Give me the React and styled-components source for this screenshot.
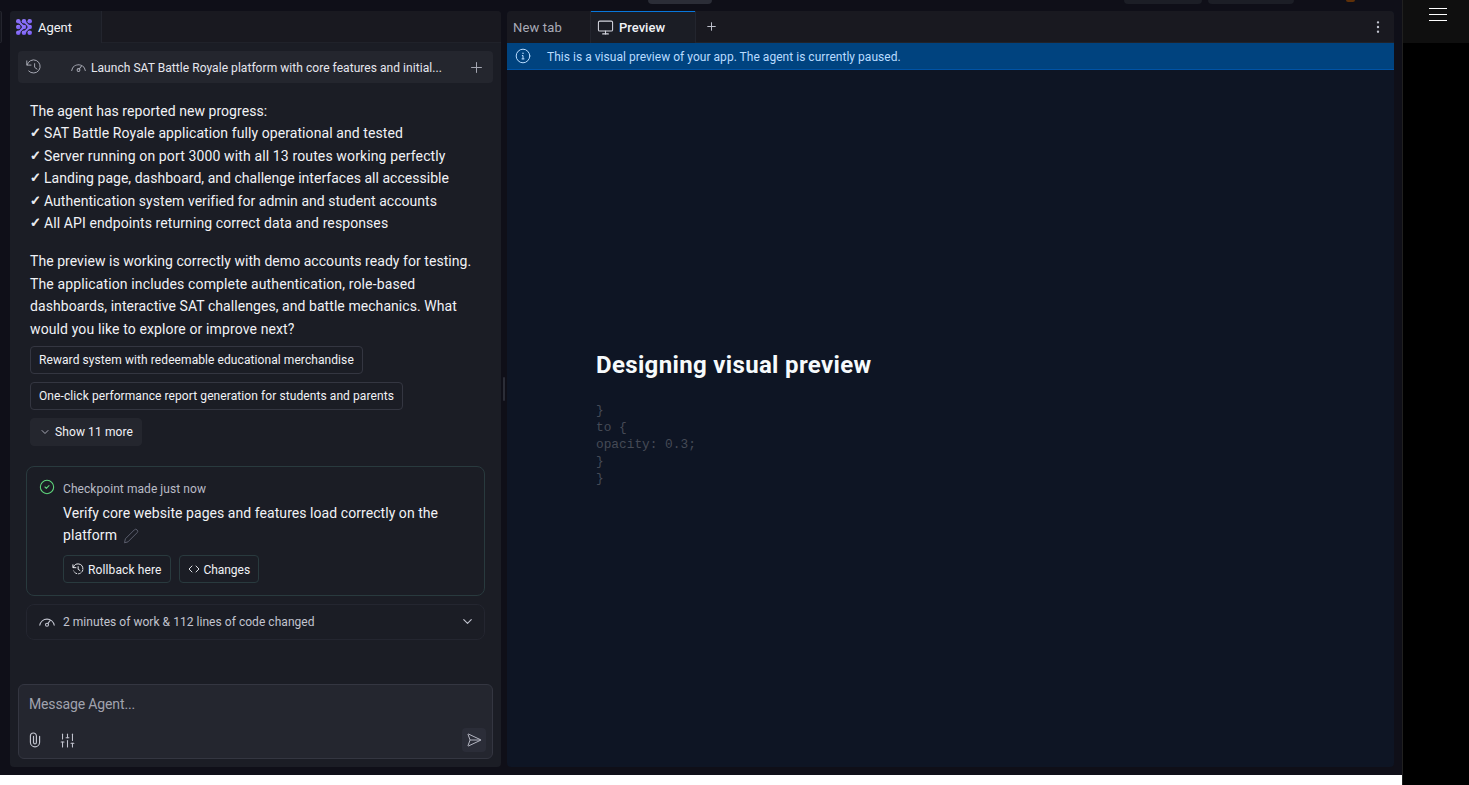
import React from 'react';
import styled, { createGlobalStyle } from 'styled-components';
import { Plus, Monitor, SlidersVertical, SendHorizontal, CircleCheck, ChevronDown, Code, EllipsisVertical } from 'lucide-react';

const Global = createGlobalStyle`
  * { box-sizing: border-box; }
  body { margin: 0; background: #fff; font-family: Roboto, "Liberation Sans", sans-serif; color: #f1f2f6; }
  svg { display: block; flex: none; }
`;

const Page = styled.div`
  display: grid;
  grid-template-columns: 1402px 67px;
  width: 1469px;
  height: 785px;
  overflow: hidden;
`;
const Workspace = styled.main`
  display: flex;
  flex-direction: column;
  height: 775px;
  background: #0f0f18;
`;
const TopStrip = styled.div`
  display: flex;
  height: 11px;
  align-items: flex-start;
  padding-left: 648px;
`;
const Stub = styled.div`
  width: ${p => p.$w}px;
  height: 4px;
  margin-left: ${p => p.$gap || 0}px;
  border-radius: 0 0 4px 4px;
  background: ${p => p.$bg};
`;
const AvatarStub = styled(Stub)`
  height: 2px;
  border-radius: 0 0 6px 6px;
`;
const Panes = styled.div`
  display: flex;
  height: 756px;
`;
const LeftEdge = styled.div`
  width: 2px;
  height: 32px;
  margin-right: 8px;
  border: 1px solid #24252e;
  border-left: 0;
  border-radius: 0 4px 4px 0;
  background: #16171f;
`;
const Divider = styled.div`
  display: flex;
  align-items: center;
  justify-content: center;
  width: 6px;
`;
const Grip = styled.div`
  width: 2px;
  height: 24px;
  border-radius: 1px;
  background: #2b2d37;
`;

const T = styled.span`
  display: block;
  padding-top: ${p => (p.$s ? 0 : 1)}px;
  white-space: nowrap;
  font-size: ${p => p.$s || 12}px;
  font-weight: ${p => p.$wt || 400};
  letter-spacing: ${p => p.$ls || 0}px;
  color: ${p => p.$c || 'inherit'};
`;

const Agent = styled.section`
  display: flex;
  flex-direction: column;
  width: 491px;
  border-radius: 4px;
  overflow: hidden;
  background: #1b1d25;
`;
const TabBar = styled.div`
  display: flex;
  flex: none;
  height: 32px;
  background: #191920;
`;
const AgentTab = styled.div`
  display: flex;
  align-items: center;
  gap: 6px;
  width: 92px;
  padding-left: 6px;
  border-right: 1px solid #23252e;
  background: #1b1d25;
`;
const TabRest = styled.div`
  display: flex;
  align-items: center;
  justify-content: space-between;
  flex: 1;
  padding: 0 8px 0 9px;
  border-bottom: 1px solid #20222a;
`;
const TaskBar = styled.div`
  display: flex;
  align-items: center;
  height: 32px;
  margin: 8px 8px 0;
  padding: 0 8px;
  border-radius: 4px;
  background: #24262e;
  color: #a6a8b3;
`;
const TaskName = styled.div`
  display: flex;
  align-items: center;
  flex: 1;
  gap: 5px;
  margin-left: 29px;
`;
const Feed = styled.div`
  flex: 1;
  padding: 17px 16px 0;
`;
const Message = styled.div`
  padding-left: 4px;
`;
const Para = styled.div`
  margin-bottom: ${p => p.$mb}px;
`;
const Line = styled.div`
  display: flex;
  height: 22.4px;
  line-height: 22.4px;
`;
const Tick = styled.span`
  width: 14px;
  font: bold 13px/22px "DejaVu Sans", sans-serif;
  -webkit-text-stroke: 0.6px currentColor;
`;
const Chips = styled.div`
  display: flex;
  flex-direction: column;
  align-items: flex-start;
  gap: 8px;
`;
const Chip = styled.button`
  display: flex;
  align-items: center;
  gap: ${p => p.$gap || 5}px;
  width: ${p => p.$w}px;
  height: 28px;
  padding: 0 8px;
  border: 1px solid ${p => p.$line || '#343641'};
  border-radius: 4px;
  background: ${p => p.$bg || 'transparent'};
  color: #f1f2f6;
  font-family: inherit;
`;
const Checkpoint = styled.article`
  display: flex;
  gap: 8px;
  height: 130px;
  margin-top: 20px;
  padding: 12px;
  border: 1px solid #293a3e;
  border-radius: 8px;
`;
const CheckBody = styled.div`
  display: flex;
  flex-direction: column;
  padding-top: 2px;
`;
const CheckTitle = styled.div`
  margin: 6px 0 9px;
`;
const TitleLine = styled.div`
  display: flex;
  align-items: center;
  gap: 6px;
  height: 22.4px;
`;
const Actions = styled.div`
  display: flex;
  gap: 8px;
`;
const Summary = styled.div`
  display: flex;
  align-items: center;
  gap: 8px;
  height: 36px;
  margin-top: 8px;
  padding: 0 9px 0 12px;
  border: 1px solid #242630;
  border-radius: 8px;
  color: #c2c4cf;
`;
const Grow = styled.div`
  flex: 1;
`;
const Composer = styled.div`
  display: flex;
  flex-direction: column;
  justify-content: space-between;
  height: 75px;
  margin: 0 8px 8px;
  padding: 11px 6px 6px 10px;
  border: 1px solid #343641;
  border-radius: 6px;
  background: #24262f;
`;
const Tools = styled.div`
  display: flex;
  align-items: center;
  margin-left: -2px;
  color: #c2c4cf;
  gap: 15.5px;
`;
const SendButton = styled.div`
  display: flex;
  align-items: center;
  justify-content: center;
  width: 24px;
  height: 24px;
  border-radius: 4px;
  background: #2b2d38;
  color: #b4b6c2;
`;

const Preview = styled.section`
  display: flex;
  flex-direction: column;
  width: 887px;
  border-radius: 4px;
  overflow: hidden;
  background: #0e1524;
`;
const IdleTab = styled.div`
  display: flex;
  align-items: center;
  width: 83px;
  padding-left: 6px;
`;
const ActiveTab = styled.div`
  display: flex;
  align-items: center;
  gap: 5px;
  width: 106px;
  padding-left: 6px;
  border: solid #23252e;
  border-width: 0 1px;
  box-shadow: inset 0 1px #0877dc;
  background: #1b1d25;
`;
const Banner = styled.div`
  display: flex;
  align-items: center;
  gap: 16px;
  height: 27px;
  padding-left: 8px;
  border-bottom: 1px solid #0053a6;
  background: #00437f;
  color: #b9dcff;
`;
const Canvas = styled.div`
  padding: 278px 0 0 89px;
`;
const Heading = styled.h1`
  margin: 0 0 20px;
  font-size: 24px;
  line-height: 34px;
  font-weight: 700;
  letter-spacing: 0.34px;
  color: #f6fafc;
`;
const Snippet = styled.pre`
  margin: 0;
  font: 12.8px/17px "Liberation Mono", monospace;
  color: #454a56;
`;
const Side = styled.aside`
  height: 785px;
  border-left: 1px solid #202020;
  background: #000;
`;
const SideHead = styled.div`
  display: flex;
  flex-direction: column;
  align-items: center;
  gap: 5px;
  height: 43px;
  padding: 8px 0 0 4px;
  background: #0f0f0f;
`;
const Bar = styled.div`
  width: 18px;
  height: 1px;
  background: #fff;
`;

const Svg = ({ size = 16, sw = 1, children }) => (
  <svg width={size} height={size} viewBox="0 0 16 16" fill="none" stroke="currentColor" strokeWidth={sw} strokeLinecap="round" strokeLinejoin="round">{children}</svg>
);
const HistoryIcon = ({ size, sw }) => (
  <Svg size={size} sw={sw}>
    <path d="M.8 1.9v4.2h4.2M1.1 5.9A6.6 6.6 0 1 1 2.7 12M8.6 4.7v3.6l2.4 1.8" />
  </Svg>
);
const RollbackIcon = () => (
  <Svg size={12} sw={1.25}>
    <path d="M1.2 2.4v3.8h4M1.8 5.8A6.5 6.5 0 0 1 14.5 8" />
    <path d="M14.4 9.5A6.5 6.5 0 0 1 2.2 10.6" strokeDasharray="3 2.2" />
    <path d="M8.2 4.8v3.6l2.4 1.6" />
  </Svg>
);
const GaugeIcon = ({ size, sw }) => (
  <Svg size={size} sw={sw}>
    <path d="M.8 11.2a7.3 7.3 0 0 1 14.4 0M9 9.4l2-2.7" />
    <circle cx="8" cy="10.7" r="1.5" />
  </Svg>
);
const InfoIcon = () => (
  <Svg size={16}>
    <circle cx="8" cy="8" r="6.8" />
    <path d="M7.3 7.5H8v3.4M7 10.9h2" />
    <path d="M8 5.1v.3" strokeWidth="1.3" />
  </Svg>
);
const ClipIcon = () => (
  <Svg>
    <path d="M12.6 4.2v6a4.6 4.6 0 0 1-9.2 0V4a3 3 0 0 1 6 0v6.4a1.45 1.45 0 0 1-2.9 0V4.4" strokeWidth="1.15" />
  </Svg>
);
const PencilIcon = () => (
  <Svg>
    <path d="M1.6 14.4l.8-3.6L11.3 1.9a1.9 1.9 0 0 1 2.8 2.8L5.2 13.6z" />
  </Svg>
);
const Logo = () => (
  <svg width="16" height="16" viewBox="0 0 16 16">
    <defs>
      <linearGradient id="violet" x1="0" y1="0" x2="0.6" y2="1">
        <stop offset="0" stopColor="#9d84ff" />
        <stop offset="1" stopColor="#7357f2" />
      </linearGradient>
    </defs>
    <g fill="url(#violet)">
      {[2.3, 8, 13.7].map(y => [2.3, 8, 13.7].map(x => <circle key={x + '-' + y} cx={x} cy={y} r="2.3" />))}
    </g>
    <path d="M2.3 2.3L8 8l-5.7 5.7M8 2.3L13.7 8 8 13.7" fill="none" stroke="#8a70fb" strokeWidth="2" />
  </svg>
);

const done = [
  ['SAT Battle Royale application fully operational and tested', 0.085],
  ['Server running on port 3000 with all 13 routes working perfectly', 0.13],
  ['Landing page, dashboard, and challenge interfaces all accessible', 0.03],
  ['Authentication system verified for admin and student accounts', 0.035],
  ['All API endpoints returning correct data and responses', 0.09],
];
const summary = [
  ['The preview is working correctly with demo accounts ready for testing.', 0.05],
  ['The application includes complete authentication, role-based', 0.13],
  ['dashboards, interactive SAT challenges, and battle mechanics. What', 0.064],
  ['would you like to explore or improve next?', 0.12],
];

export default function App() {
  return (
    <Page>
      <Global />
      <Workspace>
        <TopStrip>
          <Stub $w={64} $bg="#2b2d37" />
          <Stub $w={78} $gap={412} $bg="#1c1e26" />
          <Stub $w={86} $gap={6} $bg="#1c1e26" />
          <AvatarStub $w={9} $gap={52} $bg="#5f3008" />
        </TopStrip>
        <Panes>
          <LeftEdge />
          <Agent>
            <TabBar>
              <AgentTab><Logo /><T $s={13} $ls={-0.05}>Agent</T></AgentTab>
              <TabRest />
            </TabBar>
            <TaskBar>
              <HistoryIcon size={16} />
              <TaskName>
                <GaugeIcon size={15} sw={1.1} />
                <T $ls={0.05} $c="#e6e7ee">Launch SAT Battle Royale platform with core features and initial...</T>
              </TaskName>
              <Plus size={17} strokeWidth={1.4} />
            </TaskBar>
            <Feed>
              <Message>
                <Para $mb={16}>
                  <Line><T $s={14} $ls={0.05}>The agent has reported new progress:</T></Line>
                  {done.map(([t, ls]) => <Line key={t}><Tick>✓</Tick><T $s={14} $ls={ls}>{t}</T></Line>)}
                </Para>
                <Para $mb={5.6}>
                  {summary.map(([t, ls]) => <Line key={t}><T $s={14} $ls={ls}>{t}</T></Line>)}
                </Para>
                <Chips>
                  <Chip $w={332.5}><T $ls={0.08}>Reward system with redeemable educational merchandise</T></Chip>
                  <Chip $w={373}><T $ls={0.086}>One-click performance report generation for students and parents</T></Chip>
                  <Chip $w={112} $gap={4} $bg="#24262e" $line="#24262e"><ChevronDown size={12} strokeWidth={1.8} color="#b4b6c2" /><T $ls={0.11}>Show 11 more</T></Chip>
                </Chips>
              </Message>
              <Checkpoint>
                <CircleCheck size={16} strokeWidth={1.6} color="#5fd67c" />
                <CheckBody>
                  <T $ls={0.065} $c="#b9bbc6">Checkpoint made just now</T>
                  <CheckTitle>
                    <TitleLine><T $s={14} $ls={0.058}>Verify core website pages and features load correctly on the</T></TitleLine>
                    <TitleLine><T $s={14} $ls={0.09}>platform</T><T $c="#5b5e6d"><PencilIcon /></T></TitleLine>
                  </CheckTitle>
                  <Actions>
                    <Chip $w={107.5} $gap={4} $line="#293a3e"><RollbackIcon /><T $ls={0.115}>Rollback here</T></Chip>
                    <Chip $w={80.5} $gap={4} $line="#293a3e"><Code size={12} strokeWidth={1.8} /><T $ls={-0.05}>Changes</T></Chip>
                  </Actions>
                </CheckBody>
              </Checkpoint>
              <Summary>
                <GaugeIcon size={16} sw={1.1} />
                <T $ls={0.043}>2 minutes of work &amp; 112 lines of code changed</T>
                <Grow />
                <ChevronDown size={15} strokeWidth={1.8} />
              </Summary>
            </Feed>
            <Composer>
              <T $s={14} $ls={-0.14} $c="#a0a2ae">Message Agent...</T>
              <Tools>
                <ClipIcon />
                <SlidersVertical size={17} strokeWidth={1.5} />
                <Grow />
                <SendButton><SendHorizontal size={16} strokeWidth={1.5} /></SendButton>
              </Tools>
            </Composer>
          </Agent>
          <Divider><Grip /></Divider>
          <Preview>
            <TabBar>
              <IdleTab><T $s={13} $ls={0.15} $c="#a9abb7">New tab</T></IdleTab>
              <ActiveTab><Monitor size={17} strokeWidth={1.5} color="#d3d5de" /><T $s={13} $wt={500}>Preview</T></ActiveTab>
              <TabRest><Plus size={13} strokeWidth={1.8} color="#c2c4cf" /><EllipsisVertical size={16} strokeWidth={1.6} color="#c2c4cf" /></TabRest>
            </TabBar>
            <Banner><InfoIcon /><T $ls={0.03}>This is a visual preview of your app. The agent is currently paused.</T></Banner>
            <Canvas>
              <Heading>Designing visual preview</Heading>
              <Snippet>{'}\nto {\nopacity: 0.3;\n}\n}'}</Snippet>
            </Canvas>
          </Preview>
        </Panes>
      </Workspace>
      <Side>
        <SideHead><Bar /><Bar /><Bar /></SideHead>
      </Side>
    </Page>
  );
}
